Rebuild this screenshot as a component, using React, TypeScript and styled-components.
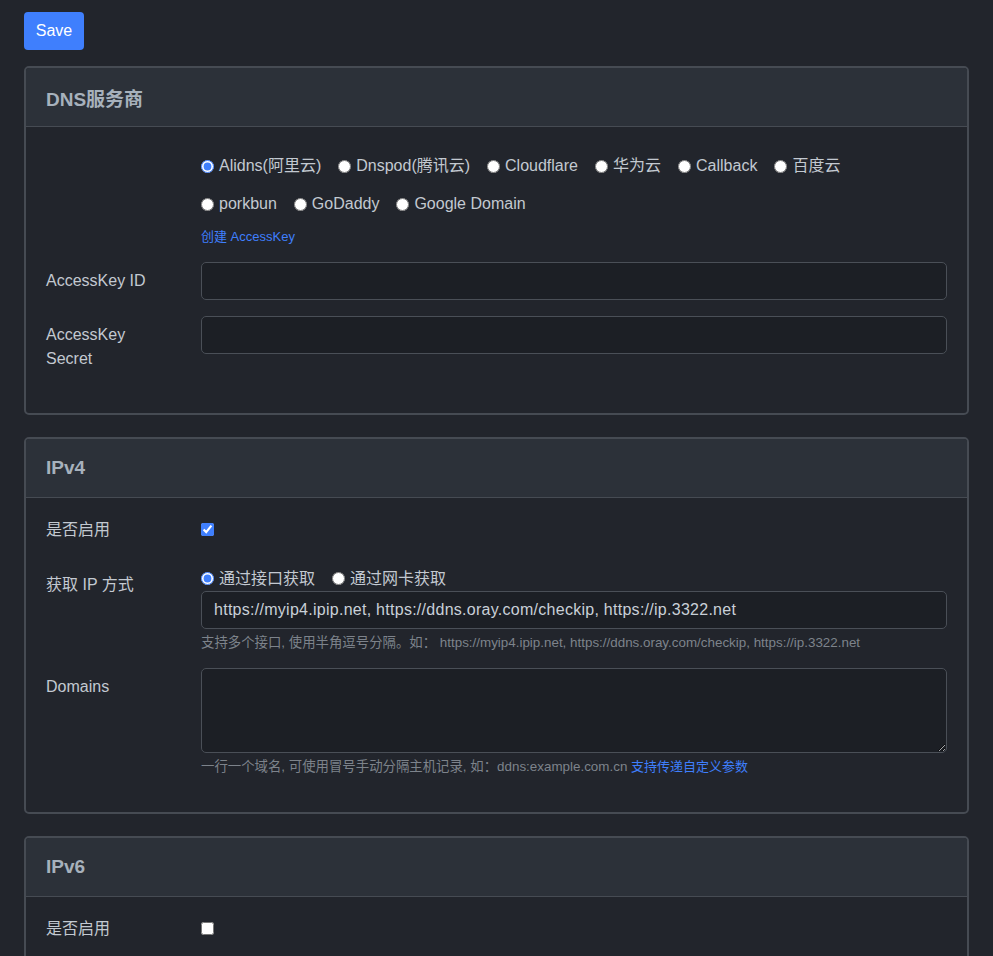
import React, { useState } from "react";
import styled, { createGlobalStyle } from "styled-components";

const GlobalStyle = createGlobalStyle`
  html, body {
    margin: 0;
    padding: 0;
    background: #22252c;
  }
  body {
    font-family: "Liberation Sans", "Noto Sans CJK SC", sans-serif;
    color: #c3c9d1;
  }
  * {
    box-sizing: border-box;
  }
`;

const Page = styled.div`
  padding: 12px 24px 24px;
  display: flex;
  flex-direction: column;
  align-items: flex-start;
`;

const SaveButton = styled.button`
  height: 38px;
  width: 60px;
  border: none;
  border-radius: 4px;
  background: #3f7ffd;
  color: #ffffff;
  font-family: inherit;
  font-size: 16px;
  cursor: pointer;
  margin-bottom: 16px;
`;

const Card = styled.section`
  width: 100%;
  border: 2px solid #464b53;
  border-radius: 5px;
  margin-bottom: 22px;
  overflow: hidden;
`;

const CardHeader = styled.div`
  height: 59px;
  padding: 0 20px;
  background: #2c3139;
  border-bottom: 1px solid #464b53;
  display: flex;
  align-items: center;
`;

const CardTitle = styled.h5`
  margin: 0;
  font-size: 19px;
  font-weight: 600;
  color: #a7b1bc;
`;

const CardBody = styled.div`
  padding: 20px 20px 19px;
`;

const Row = styled.div<{ $gap?: number }>`
  display: grid;
  grid-template-columns: 155px 1fr;
  margin-bottom: ${(p) => p.$gap ?? 16}px;
`;

const Label = styled.label<{ $flat?: boolean }>`
  padding: ${(p) => (p.$flat ? "0" : "7px")} 0;
  padding-right: 20px;
  font-size: 16px;
  line-height: 24px;
  color: #c3c9d1;
`;

const Field = styled.div`
  display: flex;
  flex-direction: column;
  min-width: 0;
`;

const RadioGroup = styled.div<{ $line: number }>`
  display: flex;
  flex-wrap: wrap;
  column-gap: 17px;
  line-height: ${(p) => p.$line}px;
`;

const RowBreak = styled.span`
  flex-basis: 100%;
  height: 0;
`;

const RadioItem = styled.label`
  display: inline-flex;
  align-items: center;
  font-size: 16px;
  color: #c3c9d1;
  cursor: pointer;
  white-space: nowrap;
`;

const Radio = styled.input.attrs({ type: "radio" })`
  width: 13px;
  height: 13px;
  margin: 0 5px 0 0;
  accent-color: #3f7ffd;
`;

const CheckBox = styled.input.attrs({ type: "checkbox" })`
  width: 13px;
  height: 13px;
  margin: 0;
  accent-color: #3f7ffd;
`;

const CheckWrap = styled.div`
  height: 23px;
  display: flex;
  align-items: center;
`;

const TextInput = styled.input`
  height: 38px;
  width: 100%;
  padding: 0 12px;
  background: #1c1f25;
  border: 1px solid #4a4f57;
  border-radius: 5px;
  color: #c9d0d8;
  font-family: inherit;
  font-size: 16px;
  letter-spacing: 0.27px;
  outline: none;
`;

const TextArea = styled.textarea`
  height: 85px;
  width: 100%;
  padding: 6px 12px;
  background: #1c1f25;
  border: 1px solid #4a4f57;
  border-radius: 5px;
  color: #c9d0d8;
  font-family: inherit;
  font-size: 16px;
  outline: none;
  display: block;
`;

const Help = styled.small`
  display: block;
  margin-top: 5px;
  font-size: 13.4px;
  line-height: 18px;
  color: #7d838b;
  white-space: nowrap;
`;

const Link = styled.a`
  color: #3f7ffd;
  text-decoration: none;
  font-size: 13px;
`;

const LinkLine = styled.div`
  margin-top: 4px;
  line-height: 18px;
`;

const providers = [
  ["alidns", "Alidns(阿里云)"],
  ["dnspod", "Dnspod(腾讯云)"],
  ["cloudflare", "Cloudflare"],
  ["huaweicloud", "华为云"],
  ["callback", "Callback"],
  ["baiducloud", "百度云"],
  ["porkbun", "porkbun"],
  ["godaddy", "GoDaddy"],
  ["googledomain", "Google Domain"],
];

function App() {
  const [dns, setDns] = useState("alidns");
  const [ipv4, setIpv4] = useState(true);
  const [ipv6, setIpv6] = useState(false);
  const [v4Type, setV4Type] = useState("url");
  const [v4Url, setV4Url] = useState(
    "https://myip4.ipip.net, https://ddns.oray.com/checkip, https://ip.3322.net"
  );

  return (
    <>
      <GlobalStyle />
      <Page>
        <SaveButton>Save</SaveButton>

        <Card>
          <CardHeader>
            <CardTitle>DNS服务商</CardTitle>
          </CardHeader>
          <CardBody>
            <Row>
              <div />
              <Field>
                <RadioGroup $line={38}>
                  {providers.map(([value, name], i) => (
                    <React.Fragment key={value}>
                      {i === 6 && <RowBreak />}
                      <RadioItem>
                        <Radio
                          name="dns"
                          checked={dns === value}
                          onChange={() => setDns(value)}
                        />
                        {name}
                      </RadioItem>
                    </React.Fragment>
                  ))}
                </RadioGroup>
                <LinkLine>
                  <Link href="#">创建 AccessKey</Link>
                </LinkLine>
              </Field>
            </Row>
            <Row>
              <Label>AccessKey ID</Label>
              <TextInput />
            </Row>
            <Row>
              <Label>
                AccessKey
                <br />
                Secret
              </Label>
              <TextInput />
            </Row>
          </CardBody>
        </Card>

        <Card>
          <CardHeader>
            <CardTitle>IPv4</CardTitle>
          </CardHeader>
          <CardBody>
            <Row $gap={24}>
              <Label $flat>是否启用</Label>
              <CheckWrap>
                <CheckBox checked={ipv4} onChange={() => setIpv4(!ipv4)} />
              </CheckWrap>
            </Row>
            <Row>
              <Label>获取 IP 方式</Label>
              <Field>
                <RadioGroup $line={25}>
                  <RadioItem>
                    <Radio
                      name="v4type"
                      checked={v4Type === "url"}
                      onChange={() => setV4Type("url")}
                    />
                    通过接口获取
                  </RadioItem>
                  <RadioItem>
                    <Radio
                      name="v4type"
                      checked={v4Type === "netInterface"}
                      onChange={() => setV4Type("netInterface")}
                    />
                    通过网卡获取
                  </RadioItem>
                </RadioGroup>
                <TextInput
                  value={v4Url}
                  onChange={(e) => setV4Url(e.target.value)}
                />
                <Help>
                  支持多个接口, 使用半角逗号分隔。如：
                  https://myip4.ipip.net, https://ddns.oray.com/checkip,
                  https://ip.3322.net
                </Help>
              </Field>
            </Row>
            <Row $gap={17}>
              <Label>Domains</Label>
              <Field>
                <TextArea />
                <Help>
                  一行一个域名, 可使用冒号手动分隔主机记录, 如：ddns:example.com.cn{" "}
                  <Link href="#">支持传递自定义参数</Link>
                </Help>
              </Field>
            </Row>
          </CardBody>
        </Card>

        <Card>
          <CardHeader>
            <CardTitle>IPv6</CardTitle>
          </CardHeader>
          <CardBody>
            <Row $gap={24}>
              <Label $flat>是否启用</Label>
              <CheckWrap>
                <CheckBox checked={ipv6} onChange={() => setIpv6(!ipv6)} />
              </CheckWrap>
            </Row>
          </CardBody>
        </Card>
      </Page>
    </>
  );
}

export default App;
